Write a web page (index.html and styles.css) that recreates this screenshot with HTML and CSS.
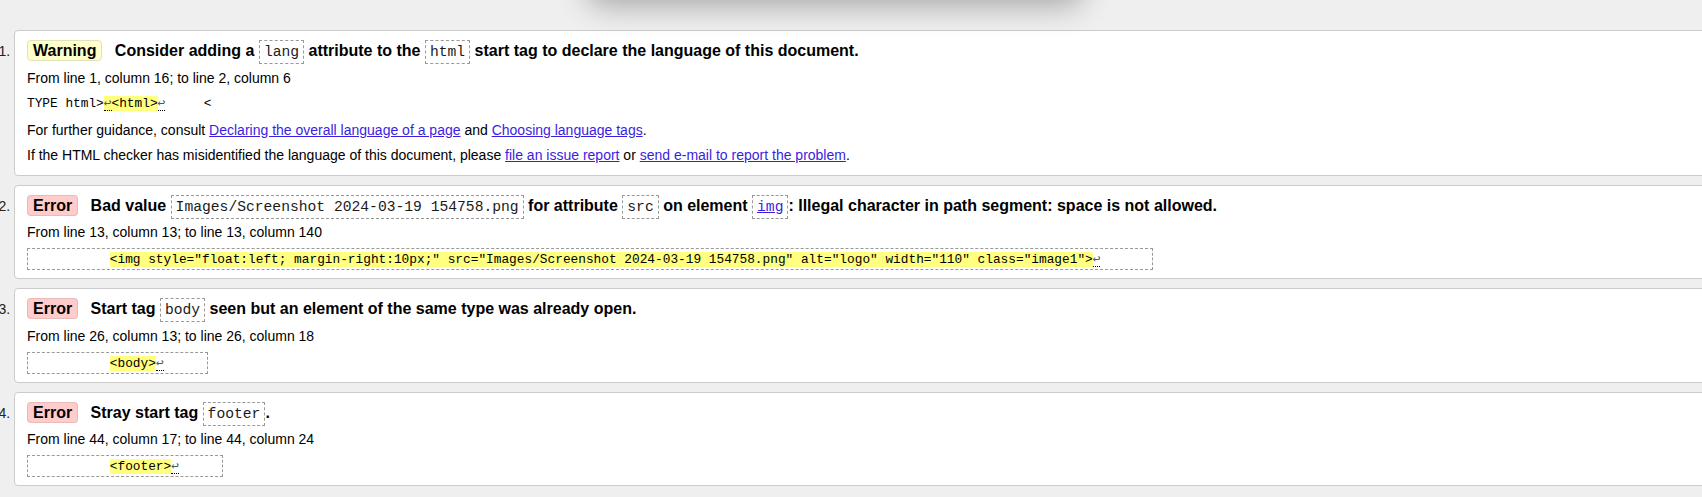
FILE: index.html
```html
<!DOCTYPE html>
<html lang="en">
<head>
<meta charset="utf-8">
<title>Validation results</title>
<link rel="stylesheet" href="styles.css">
</head>
<body>
<div class="topshade"></div>
<ol class="messages">
  <li class="msg">
    <div class="title"><span class="badge warn">Warning</span> Consider adding a <code class="ref">lang</code> attribute to the <code class="ref">html</code> start tag to declare the language of this document.</div>
    <p class="loc">From line 1, column 16; to line 2, column 6</p>
    <p class="extract">TYPE html&gt;<mark><span class="lf">↩</span>&lt;html&gt;</mark><span class="lf">↩</span>     &lt;</p>
    <p class="note">For further guidance, consult <a href="#">Declaring the overall language of a page</a> and <a href="#">Choosing language tags</a>.</p>
    <p class="note">If the HTML checker has misidentified the language of this document, please <a href="#">file an issue report</a> or <a href="#">send e-mail to report the problem</a>.</p>
  </li>
  <li class="msg">
    <div class="title"><span class="badge err">Error</span> Bad value <code class="ref">Images/Screenshot 2024-03-19 154758.png</code> for attribute <code class="ref">src</code> on element <code class="ref"><a href="#">img</a></code>: Illegal character in path segment: space is not allowed.</div>
    <p class="loc">From line 13, column 13; to line 13, column 140</p>
    <div class="extract-row"><code class="extract box">          <mark>&lt;img style="float:left; margin-right:10px;" src="Images/Screenshot 2024-03-19 154758.png" alt="logo" width="110" class="image1"&gt;</mark><span class="lf">↩</span>      </code></div>
  </li>
  <li class="msg">
    <div class="title"><span class="badge err">Error</span> Start tag <code class="ref">body</code> seen but an element of the same type was already open.</div>
    <p class="loc">From line 26, column 13; to line 26, column 18</p>
    <div class="extract-row"><code class="extract box">          <mark>&lt;body&gt;</mark><span class="lf">↩</span>     </code></div>
  </li>
  <li class="msg">
    <div class="title"><span class="badge err">Error</span> Stray start tag <code class="ref">footer</code>.</div>
    <p class="loc">From line 44, column 17; to line 44, column 24</p>
    <div class="extract-row"><code class="extract box">          <mark>&lt;footer&gt;</mark><span class="lf">↩</span>     </code></div>
  </li>
</ol>
</body>
</html>
```

FILE: styles.css
```css
html {
  overflow: hidden;
}

body {
  margin: 0;
  background: #efefef;
  font-family: "Liberation Sans", Arial, sans-serif;
  font-size: 14px;
  color: #000;
}

.topshade {
  position: absolute;
  left: 595px;
  top: -62px;
  width: 480px;
  height: 56px;
  background: #d0d0d0;
  border-radius: 8px;
  box-shadow: 0 4px 30px 8px rgba(0, 0, 0, 0.3);
  z-index: 5;
}

.messages {
  margin: 30px -40px 0 0;
  padding: 0 0 0 14px;
  list-style: decimal;
}

.msg {
  background: #fff;
  border: 1px solid #ccc;
  border-radius: 4px;
  padding: 9px 12px 8px;
  margin-bottom: 9px;
}

.msg::marker {
  font-size: 14px;
  color: #222;
}

.title {
  font-size: 16px;
  font-weight: bold;
  line-height: 22px;
}

.badge {
  padding: 1px 5px;
  border: 1px solid;
  border-radius: 4px;
  margin-right: 8px;
}

.badge.warn {
  background: #ffffcc;
  border-color: #e2e2b8;
}

.badge.err {
  background: #ffcccc;
  border-color: #e8baba;
}

.ref {
  font-family: "Liberation Mono", "DejaVu Sans Mono", monospace;
  font-size: 14.67px;
  font-weight: normal;
  line-height: 16px;
  padding: 3px 4px;
  border: 1px dashed #999;
  color: #1a1a1a;
}

a {
  color: #3a1ee0;
  text-decoration: underline;
}

.loc,
.note {
  margin: 5px 0 0;
  line-height: 20px;
}

.loc {
  margin-top: 5.5px;
}

.note {
  margin-top: 5.5px;
}

.note:last-child {
  margin-bottom: 1.5px;
}

.extract {
  margin: 5.5px 0 0;
  font-family: "Liberation Mono", "DejaVu Sans Mono", monospace;
  font-size: 12.8px;
  line-height: 20px;
  white-space: pre;
}

.extract-row {
  display: flex;
  margin-top: 6px;
}

.extract.box {
  margin: 0;
  line-height: 19px;
  padding: 0 5px;
  border: 1px dashed #999;
}

mark {
  background: #ffff80;
  color: #000;
}

.lf {
  font-family: "DejaVu Sans Mono", monospace;
  color: #555;
  border-bottom: 1px dotted #000;
}
```
